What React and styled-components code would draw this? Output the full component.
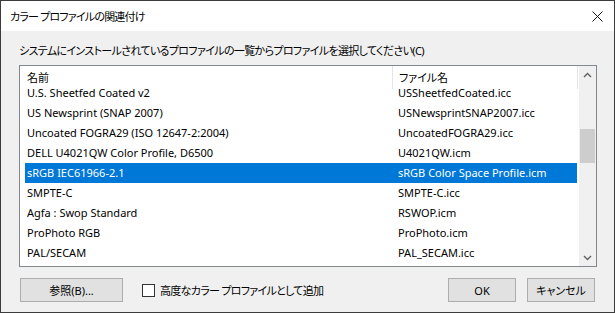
import { createGlobalStyle, styled } from "styled-components";

const profiles = [
  { name: "U.S. Sheetfed Coated v2", file: "USSheetfedCoated.icc" },
  { name: "US Newsprint (SNAP 2007)", file: "USNewsprintSNAP2007.icc" },
  { name: "Uncoated FOGRA29 (ISO 12647-2:2004)", file: "UncoatedFOGRA29.icc" },
  { name: "DELL U4021QW Color Profile, D6500", file: "U4021QW.icm" },
  { name: "sRGB IEC61966-2.1", file: "sRGB Color Space Profile.icm", selected: true },
  { name: "SMPTE-C", file: "SMPTE-C.icc" },
  { name: "Agfa : Swop Standard", file: "RSWOP.icm" },
  { name: "ProPhoto RGB", file: "ProPhoto.icm" },
  { name: "PAL/SECAM", file: "PAL_SECAM.icc" },
];

const Chevron = ({ down }) => (
  <svg width="9" height="6" viewBox="0 0 9 6">
    <path
      d={down ? "M1 1 L4.5 4.5 L8 1" : "M1 5 L4.5 1.5 L8 5"}
      fill="none"
      stroke="#606060"
      strokeWidth="1.4"
    />
  </svg>
);

const App = () => {
  return (
    <>
      <GlobalStyle />
      <Window>
        <TitleBar>
          <Title>カラー プロファイルの関連付け</Title>
          <CloseButton>
            <svg width="11" height="11" viewBox="0 0 11 11">
              <path d="M0.5 0.5 L10.5 10.5 M10.5 0.5 L0.5 10.5" stroke="#1a1a1a" strokeWidth="1" />
            </svg>
          </CloseButton>
        </TitleBar>
        <Body>
          <Prompt>システムにインストールされているプロファイルの一覧からプロファイルを選択してください(C)</Prompt>
          <ListBox>
            <ListMain>
              <Header>
                <HeaderCell $width={373}>名前</HeaderCell>
                <HeaderCell $width={185}>ファイル名</HeaderCell>
              </Header>
              <Rows>
                {/* scrolled a few pixels: the first row sits half under the header */}
                <RowList>
                  {profiles.map((p) => (
                    <Row key={p.name} $selected={p.selected}>
                      <Cell>{p.name}</Cell>
                      <Cell>{p.file}</Cell>
                    </Row>
                  ))}
                </RowList>
              </Rows>
            </ListMain>
            <ScrollBar>
              <ArrowButton>
                <Chevron />
              </ArrowButton>
              <Track>
                <Thumb />
              </Track>
              <ArrowButton>
                <Chevron down />
              </ArrowButton>
            </ScrollBar>
          </ListBox>
          <Footer>
            <Button $width={103}>参照(B)...</Button>
            <CheckLabel>
              <CheckBox />
              高度なカラー プロファイルとして追加
            </CheckLabel>
            <Spacer />
            <Button $width={68}>OK</Button>
            <Button $width={68}>キャンセル</Button>
          </Footer>
        </Body>
      </Window>
    </>
  );
};

export default App;

const GlobalStyle = createGlobalStyle`
  html, body {
    margin: 0;
    padding: 0;
    background: #f0f0f0;
  }
  body {
    font-family: "Noto Sans", "Noto Sans CJK JP", sans-serif;
    font-size: 11px;
    font-feature-settings: "palt" 1;
    color: #000;
  }
`;

const Window = styled.div`
  width: 615px;
  height: 313px;
  box-sizing: border-box;
  border: 1px solid #3c3c3c;
  display: flex;
  flex-direction: column;
  background: #f0f0f0;
`;

const TitleBar = styled.div`
  height: 30px;
  flex: none;
  background: #fff;
  display: flex;
  align-items: center;
  padding-left: 9px;
  padding-right: 10px;
`;

const Title = styled.div`
  flex: 1;
  letter-spacing: -0.8px;
`;

const CloseButton = styled.div`
  display: flex;
  align-items: center;
  justify-content: center;
  width: 14px;
  height: 14px;
`;

const Body = styled.div`
  flex: 1;
  display: flex;
  flex-direction: column;
  padding: 12px 19px 9px 18px;
`;

const Prompt = styled.div`
  line-height: 16px;
  height: 16px;
  white-space: nowrap;
  letter-spacing: -0.65px;
`;

const ListBox = styled.div`
  margin-top: 6px;
  width: 578px;
  height: 202px;
  box-sizing: border-box;
  border: 1px solid #828790;
  background: #fff;
  display: flex;
  overflow: hidden;
`;

const ListMain = styled.div`
  flex: 1;
  display: flex;
  flex-direction: column;
  min-width: 0;
`;

const Header = styled.div`
  height: 23px;
  flex: none;
  display: flex;
  background: #fff;
`;

const HeaderCell = styled.div`
  width: ${(p) => p.$width}px;
  box-sizing: border-box;
  border-right: 1px solid #e5e5e5;
  padding-left: 6px;
  line-height: 23px;
  white-space: nowrap;

  &:first-child {
    padding-left: 7px;
  }
`;

const Rows = styled.div`
  flex: 1;
  min-height: 0;
  overflow: hidden;
`;

const RowList = styled.div`
  display: flex;
  flex-direction: column;
  margin-top: -6px;
`;

const Row = styled.div`
  flex: none;
  height: 20px;
  margin-left: 5px;
  width: 552px;
  padding-left: 2px;
  box-sizing: border-box;
  display: grid;
  grid-template-columns: 371px 1fr;
  align-items: center;
  line-height: 20px;
  white-space: nowrap;
  background: ${(p) => (p.$selected ? "#0078d7" : "transparent")};
  color: ${(p) => (p.$selected ? "#fff" : "#000")};
`;

const Cell = styled.div`
  overflow: hidden;
`;

const ScrollBar = styled.div`
  width: 17px;
  flex: none;
  display: flex;
  flex-direction: column;
  background: #f0f0f0;
`;

const ArrowButton = styled.div`
  height: 17px;
  flex: none;
  display: flex;
  align-items: center;
  justify-content: center;
`;

const Track = styled.div`
  flex: 1;
  padding: 46px 1px 0 1px;
`;

const Thumb = styled.div`
  height: 34px;
  background: #cdcdcd;
`;

const Footer = styled.div`
  margin-top: 11px;
  display: flex;
  align-items: center;
  gap: 11px;
  padding-left: 1px;
`;

const Button = styled.div`
  width: ${(p) => p.$width}px;
  height: 24px;
  box-sizing: border-box;
  border: 1px solid #adadad;
  background: #e1e1e1;
  display: flex;
  align-items: center;
  justify-content: center;
`;

const CheckLabel = styled.label`
  display: flex;
  align-items: center;
  gap: 4px;
  margin-left: 8px;
  white-space: nowrap;
  letter-spacing: -0.7px;
`;

const CheckBox = styled.span`
  width: 13px;
  height: 13px;
  box-sizing: border-box;
  border: 1px solid #333;
  background: #fff;
  margin-right: 1px;
`;

const Spacer = styled.div`
  flex: 1;
`;
